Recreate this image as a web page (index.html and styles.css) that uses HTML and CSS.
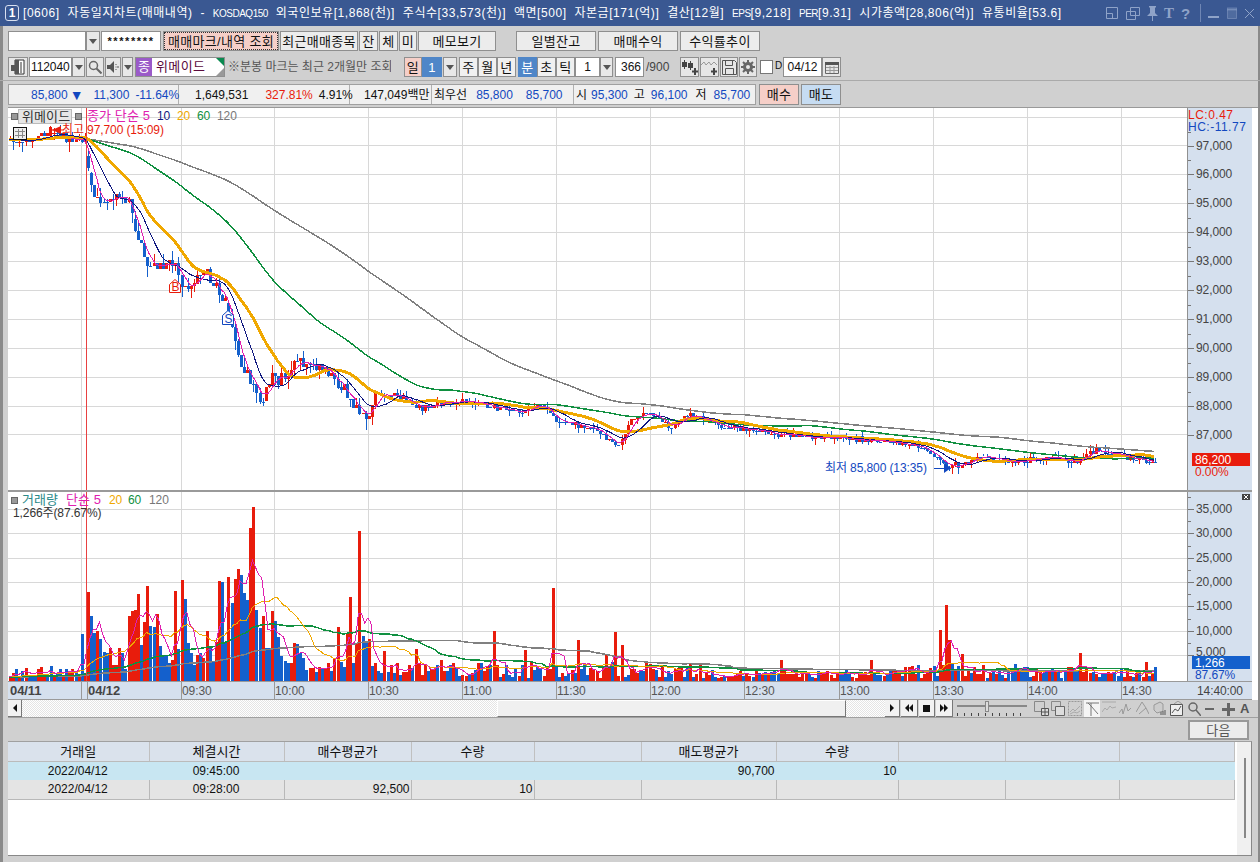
FILE: index.html
```html
<!DOCTYPE html>
<html>
	<head>
		<meta charset="UTF-8">
		<title>자동일지차트</title>
		<link rel="stylesheet" href="styles.css">
	</head>
	<body>
		<div class="window">
			<!-- 타이틀바 -->
			<header class="titlebar">
				<span class="winno">1</span>
				<span class="title">[0606] 자동일지차트(매매내역) - <span class="nar">KOSDAQ150</span> 외국인보유[1,868(천)] 주식수[33,573(천)] 액면[500] 자본금[171(억)] 결산[12월] <span class="nar">EPS</span>[9,218] <span class="nar">PER</span>[9.31] 시가총액[28,806(억)] 유통비율[53.6]</span>
				<div class="wintools">
					<svg width="12" height="14" viewBox="0 0 12 14"><path d="M.5 1.5h11v11H.5zM.5 7.5h6v5" fill="none" stroke="#8fa3c8"/></svg>
					<svg class="ml8" width="14" height="14" viewBox="0 0 14 14"><path d="M4.5 1.5h9v8h-9zM.5 5.5h9v8h-9z" fill="none" stroke="#8fa3c8"/></svg>
					<svg class="ml6" width="13" height="15" viewBox="0 0 13 15"><path d="M3 0h7v1L9 2v5l3 3H1l3-3V2L3 1zM6 10h1v5H6z" fill="#8fa3c8"/></svg>
					<span class="wt ml5">T</span>
					<span class="wq ml7">?</span>
					<i class="windiv"></i>
					<svg class="ml7" width="11" height="12" viewBox="0 0 11 12"><path d="M0 9h11v2H0z" fill="#8fa3c8"/></svg>
					<svg class="ml8" width="10" height="12" viewBox="0 0 10 12"><path d="M.5 2.5h9v9h-9zM0 1h10v2H0z" fill="#8fa3c8" stroke="#8fa3c8" stroke-width=".5" fill-opacity=".25"/></svg>
					<svg class="ml8" width="9" height="12" viewBox="0 0 9 12"><path d="M0 2l9 9M9 2l-9 9" stroke="#8fa3c8" fill="none"/></svg>
				</div>
			</header>

			<!-- 조회 버튼줄 -->
			<div class="toolrow r1">
				<span class="inp w78"></span>
				<span class="drop w14"><i></i></span>
				<span class="inp w60 ml1 pw">********</span>
				<button class="btn pinkdot w116 ml2">매매마크/내역 조회</button>
				<button class="btn w78 ml1">최근매매종목</button>
				<button class="btn w19 ml1">잔</button>
				<button class="btn w19 ml1">체</button>
				<button class="btn w18 ml1">미</button>
				<button class="btn w78 ml1">메모보기</button>
				<button class="btn w80 ml20">일별잔고</button>
				<button class="btn w80 ml2">매매수익</button>
				<button class="btn w80 ml2">수익률추이</button>
			</div>

			<!-- 종목 버튼줄 -->
			<div class="toolrow r2">
				<span class="ico w20"><svg width="16" height="16" viewBox="0 0 16 16"><path d="M5 1h9v14H5z" fill="#fff" stroke="#333"/><path d="M5 1h4v14H5zM1 6h6v6H1z" fill="#555"/><path d="M11 3v11" stroke="#333"/></svg></span>
				<span class="inp w43 ml1 code">112040</span>
				<span class="drop w13"><i></i></span>
				<span class="ico w18 ml1"><svg width="14" height="14" viewBox="0 0 14 14"><circle cx="5.5" cy="5.5" r="4" fill="none" stroke="#666" stroke-width="1.5"/><path d="M8.5 8.5l5 5" stroke="#666" stroke-width="2"/></svg></span>
				<span class="ico w16 ml1"><svg width="13" height="12" viewBox="0 0 13 12"><path d="M0 4h3l4-4v12L3 8H0z" fill="#555"/><path d="M9 3v1M9 5.500v1M9 8v1M11 5v2" stroke="#555"/></svg></span>
				<span class="drop w11 ml1"><i></i></span>
				<div class="stock ml2"><span class="jong">종</span><span class="sname">위메이드</span></div>
				<span class="note">※분봉 마크는 최근 2개월만 조회</span>
				<button class="btn flat pink w18 ml13">일</button>
				<button class="btn flat blue w20">1</button>
				<span class="drop w14 ml1"><i></i></span>
				<button class="btn flat w19 ml2">주</button>
				<button class="btn flat w19">월</button>
				<button class="btn flat w19">년</button>
				<button class="btn flat blue w19 ml2">분</button>
				<button class="btn flat w19">초</button>
				<button class="btn flat w19">틱</button>
				<span class="inp w25 ctr">1</span>
				<span class="drop w13"><i></i></span>
				<span class="inp w29 ml2 rgt">366</span>
				<span class="of900">/900</span>
				<span class="ico w19 ml10"><svg width="17" height="16" viewBox="0 0 17 16"><path d="M3 1h1v2h2v5H4v2H3V8H1V3h2zM9 2h1v2h2v5h-2v2H9V9H7V4h2z" fill="#444"/><path d="M13 9h2v2.500h2v2h-2V16h-2v-2.500h-2v-2h2z" fill="#444"/></svg></span>
				<span class="ico w19 ml1"><svg width="17" height="16" viewBox="0 0 17 16"><path d="M0 6l3-3 2 3 3-3 2 3 3-3 3 3" fill="none" stroke="#999"/><path d="M12 9h2v2.500h2v2h-2V16h-2v-2.500h-2v-2h2z" fill="#444"/></svg></span>
				<span class="ico w18 ml1"><svg width="15" height="15" viewBox="0 0 15 15"><path d="M.5.500h12l2 2v12H.5z" fill="none" stroke="#555" stroke-width="1"/><path d="M3.500.500h7v5h-7zM3.500 8.500h8v6h-8z" fill="none" stroke="#555"/></svg></span>
				<span class="ico w18 ml1"><svg width="14" height="14" viewBox="0 0 14 14"><circle cx="7" cy="7" r="3.500" fill="none" stroke="#666" stroke-width="3"/><path d="M7 0v3M7 11v3M0 7h3M11 7h3M2 2l2 2M10 10l2 2M12 2l-2 2M4 10l-2 2" stroke="#666" stroke-width="2"/></svg></span>
				<span class="chk ml3"></span>
				<span class="dlabel">D</span>
				<span class="inp w39 ml2 ctr">04/12</span>
				<span class="ico w19"><svg width="14" height="13" viewBox="0 0 14 13"><path d="M.5 2.500h13v10H.5z" fill="none" stroke="#666"/><path d="M0 1h14v3H0z" fill="#555"/><path d="M1 6.500h12M1 9.500h12M5 5v7M9 5v7" stroke="#999"/></svg></span>
			</div>

			<div class="rowline"></div>

			<!-- 시세줄 -->
			<div class="quoterow">
				<div class="quote">
					<div class="qc q1"><span class="bl">85,800</span><span class="arrow">▼</span><span class="bl ml10">11,300</span><span class="bl ml6">-11.64%</span></div>
					<div class="qc q2"><span class="m16">1,649,531</span><span class="rd ml17">327.81%</span><span class="ml6">4.91%</span></div>
					<div class="qc q3"><span class="ml14">147,049백만</span></div>
					<div class="qc q4"><span class="ml2">최우선</span><span class="bl ml9">85,800</span><span class="bl ml13">85,700</span></div>
					<div class="qc q5"><span class="ml2">시</span><span class="bl ml4">95,300</span><span class="ml6">고</span><span class="bl ml6">96,100</span><span class="ml8">저</span><span class="bl ml7">85,700</span></div>
				</div>
				<button class="btn flat pink w40 ml3">매수</button>
				<button class="btn flat lblue w40 ml2">매도</button>
			</div>

			<!-- 차트 -->
			<div class="chartbox" id="chart"></div>

			<!-- 차트 스크롤 -->
			<div class="scrollrow">
				<span class="sbtn w14"><i class="tri-l"></i></span>
				<span class="track w475"></span>
				<span class="thumb"></span>
				<span class="track w39"></span>
				<span class="sbtn w15"><i class="tri-r"></i></span>
				<span class="sbtn w17 ml1"><i class="tri-l"></i><i class="tri-l"></i></span>
				<span class="sbtn w16 ml1"><i class="stop"></i></span>
				<span class="sbtn w17 ml1"><i class="tri-r"></i><i class="tri-r"></i></span>
				<div class="slider"><i class="sl-line"></i><i class="sl-knob"></i></div>
				<div class="charttools">
					<svg width="15" height="15" viewBox="0 0 15 15"><path d="M.5.500h10v10H.5z" fill="none" stroke="#888"/><path d="M7.500 7.500h7v7h-7zM11 8v6M8 11h6" fill="#ddd" stroke="#555"/></svg>
					<svg class="ml2" width="14" height="15" viewBox="0 0 14 15"><path d="M.5.500h9v9h-9z" fill="none" stroke="#888"/><path d="M4.500 5.500h9v9h-9z" fill="#ddd" stroke="#666"/></svg>
					<svg class="ml3" width="14" height="15" viewBox="0 0 14 15"><path d="M.5.500h13v14H.5z" fill="none" stroke="#999" stroke-dasharray="2 1"/><path d="M2 11l3-3 2 2 5-5M2 13l4-2 3 1 3-2" fill="none" stroke="#aaa"/></svg>
					<span class="sel ml2"><svg width="13" height="14" viewBox="0 0 13 14"><path d="M0 1h13M2 1l3 3M5 1v13M5 4l7 8" fill="none" stroke="#777"/></svg></span>
					<svg class="ml2" width="14" height="15" viewBox="0 0 14 15"><path d="M0 1h14M0 11l3-4 2 2 3-4 2 2 4-1" fill="none" stroke="#aaa"/></svg>
					<svg class="ml3" width="12" height="15" viewBox="0 0 12 15"><path d="M0 12l3-4 1 5 3-10 2 7 3-3" fill="none" stroke="#999"/></svg>
					<svg class="ml5" width="13" height="15" viewBox="0 0 13 15"><path d="M0 11l6-10 4 6-7 6M10 7l3 6" fill="none" stroke="#999"/></svg>
					<svg class="ml4" width="13" height="15" viewBox="0 0 13 15"><path d="M1 4l6-3 3 2v7l-6 2-3-3z" fill="#ccc" stroke="#999"/><path d="M8 14v-3M10 14v-4M12 14v-5" stroke="#555"/></svg>
					<svg class="ml4" width="13" height="15" viewBox="0 0 13 15"><path d="M.5 3.500h12v11H.5z" fill="#eee" stroke="#555"/><path d="M2 12l3-4 3 2 3-5" fill="none" stroke="#555"/><path d="M4 3l4-3 4 3" fill="none" stroke="#999"/></svg>
					<svg class="ml5" width="13" height="14" viewBox="0 0 13 14"><circle cx="5" cy="5" r="4" fill="none" stroke="#666" stroke-width="1.500"/><path d="M8 8l5 6" stroke="#666" stroke-width="1.500"/></svg>
					<svg class="ml4" width="10" height="14" viewBox="0 0 10 14"><path d="M0 6h9v2H0z" fill="#666"/></svg>
					<svg class="ml7" width="13" height="14" viewBox="0 0 13 14"><path d="M5 1h3v5h5v3H8v5H5V9H0V6h5z" fill="#666"/></svg>
					<span class="aicon ml5">A</span>
				</div>
			</div>

			<div class="nextrow"><button class="btn nextbtn">다음</button></div>

			<!-- 매매내역 -->
			<div class="gridwrap">
				<table class="grid">
					<colgroup>
						<col class="c1"><col class="c2"><col class="c3"><col class="c4"><col class="c5">
						<col class="c6"><col class="c7"><col class="c8"><col class="c9"><col class="c10">
					</colgroup>
					<thead>
						<tr><th>거래일</th><th>체결시간</th><th>매수평균가</th><th>수량</th><th></th><th>매도평균가</th><th>수량</th><th></th><th></th><th></th></tr>
					</thead>
					<tbody>
						<tr class="sel-row"><td class="ctr">2022/04/12</td><td class="ctr">09:45:00</td><td></td><td></td><td></td><td>90,700</td><td>10</td><td></td><td></td><td></td></tr>
						<tr><td class="ctr">2022/04/12</td><td class="ctr">09:28:00</td><td>92,500</td><td>10</td><td></td><td></td><td></td><td></td><td></td><td></td></tr>
					</tbody>
				</table>
				<div class="vscroll"><i></i></div>
			</div>
		</div>
		<script src="chart.js"></script>
	</body>
</html>
```

FILE: styles.css
```css
*{
	margin:0;padding:0;
	box-sizing:border-box;
}
html,body{
	width:1260px;
	height:862px;
	overflow:hidden;
}
body{
	background:#d0d0d0;
	font:12px/1 "Liberation Sans","Noto Sans CJK KR",sans-serif;
	color:#111;
}
.window{
	height:862px;
	border-left:3px solid #8a8a8a;
	border-right:2px solid #8a8a8a;
	display:flex;
	flex-direction:column;
}
/*타이틀바*/
.titlebar{
	height:26px;
	margin:0 -2px 0 -3px;
	background:#3a5892;
	color:#fff;
	display:flex;
	align-items:center;
	padding-left:5px;
	flex:none;
}
.winno{
	width:14px;
	height:16px;
	border:1px solid #d8e0f0;
	border-radius:3px;
	font-weight:bold;
	text-align:center;
	line-height:14px;
	color:#fff;
	font-size:12px;
}
.title{
	margin-left:4px;
	font-size:12px;
	white-space:nowrap;
	letter-spacing:.55px;
	word-spacing:4px;
	width:1080px;
}
.nar{
	font-size:10px;
	letter-spacing:-.5px;
}
.wintools{
	margin-left:3px;
	display:flex;
	align-items:center;
}
.wt{color:#8fa3c8;font:bold 15px "Liberation Serif",serif;}
.wq{color:#8fa3c8;font:bold 15px "Liberation Sans",sans-serif;}
.windiv{
	width:1px;
	height:18px;
	background:#6f86b4;
	margin-left:10px;
}
/*버튼줄*/
.toolrow{
	display:flex;
	padding-left:5px;
	height:20px;
	flex:none;
	align-items:stretch;
}
.r1{margin-top:5px;}
.r2{margin-top:6px;}
.rowline{
	height:1px;
	margin:3px -2px 0 -3px;
	background:#aaa;
	flex:none;
}
.inp{
	background:#fff;
	border:1px solid #8f8f8f;
	display:flex;
	align-items:center;
	padding:0 2px;
	font-size:12px;
	white-space:nowrap;
}
.pw{justify-content:center;font-weight:bold;font-size:11px;letter-spacing:1.6px;}
.code{font-size:12px;padding:0 1px;letter-spacing:-.1px;}
.ctr{justify-content:center;text-align:center;}
.rgt{justify-content:flex-end;}
.drop{
	background:#e8e8e8;
	border:1px solid #8f8f8f;
	display:flex;
	align-items:center;
	justify-content:center;
}
.drop i{
	border:4px solid transparent;
	border-top:5px solid #555;
	border-bottom:0;
}
.btn{
	font:inherit;
	font-size:13px;
	letter-spacing:.3px;
	background:#ececec;
	border:1px solid #8f8f8f;
	color:#111;
	white-space:nowrap;
	overflow:hidden;
}
.btn.flat{background:#f0f0f0;}
.btn.pink{background:#f6cfc8;}
.btn.blue{background:#4f86c8;color:#fff;border-color:#4f86c8;}
.btn.lblue{background:#c6dcf2;}
.pinkdot{
	background:#f6cfc8;
	outline:1px dotted #333;
	outline-offset:-2px;
}
.ico{
	background:#e6e6e6;
	border:1px solid #8f8f8f;
	display:flex;
	align-items:center;
	justify-content:center;
}
.stock{
	width:90px;
	background:#fff;
	border:1px solid #8f8f8f;
	display:flex;
	position:relative;
	overflow:hidden;
}
.stock:before{
	content:"";
	position:absolute;
	right:0;top:0;
	border-top:8px solid #0a8a50;
	border-left:8px solid transparent;
}
.stock:after{
	content:"";
	position:absolute;
	right:0;bottom:0;
	border-bottom:8px solid #999;
	border-left:8px solid transparent;
}
.jong{
	width:16px;
	background:#9a5ac8;
	color:#fff;
	text-align:center;
	line-height:18px;
	font-size:13px;
}
.sname{
	color:#5a0a3c;
	margin-left:4px;
	line-height:18px;
	font-size:13px;
	letter-spacing:.4px;
}
.note{
	margin-left:3px;
	width:163px;
	line-height:20px;
	color:#555;
	font-size:12px;
	white-space:nowrap;
	overflow:hidden;
}
.of900{line-height:20px;margin-left:2px;width:24px;color:#444;}
.chk{
	width:13px;
	height:14px;
	margin-top:3px;
	background:#fff;
	border:1px solid #777;
}
.dlabel{font-size:10px;line-height:18px;margin-left:2px;width:6px;}

.w11{width:11px;}.w13{width:13px;}.w14{width:14px;}.w15{width:15px;}.w16{width:16px;}.w17{width:17px;}
.w18{width:18px;}.w19{width:19px;}.w20{width:20px;}.w25{width:25px;}.w29{width:29px;}.w39{width:39px;}
.w40{width:40px;}.w43{width:43px;}.w60{width:60px;}.w78{width:78px;}.w80{width:80px;}.w116{width:116px;}
.ml1{margin-left:1px;}.ml2{margin-left:2px;}.ml3{margin-left:3px;}.ml4{margin-left:4px;}.ml5{margin-left:5px;}
.ml6{margin-left:6px;}.ml7{margin-left:7px;}.ml8{margin-left:8px;}.ml9{margin-left:9px;}.ml10{margin-left:10px;}
.ml13{margin-left:13px;}.ml14{margin-left:14px;}.ml17{margin-left:17px;}.ml20{margin-left:20px;}
/*시세줄*/
.quoterow{
	display:flex;
	height:21px;
	margin-top:3px;
	padding-left:5px;
	flex:none;
}
.quote{
	width:748px;
	display:flex;
	background:#f0f0f0;
	border:1px solid #a0a0a0;
	white-space:nowrap;
}
.qc{
	display:flex;
	align-items:center;
	border-right:1px solid #b0b0b0;
	font-size:12px;
}
.q1{width:170px;padding-left:22px;}
.q2{width:171px;}
.q3{width:82px;}
.q4{width:142px;}
.q5{flex:1;border-right:0;}
.m16{margin-left:16px;}
.bl{color:#1248c0;}
.rd{color:#e81c0c;}
.arrow{color:#1248c0;font-size:14px;margin-left:2px;}
/*차트*/
.chartbox{
	height:593px;
	margin:2px 0 0 5px;
	border-top:1px solid #999;
	background:#fff;
	flex:none;
}
.chartbox svg{display:block;}
.scrollrow{
	height:18px;
	margin-left:5px;
	display:flex;
	align-items:stretch;
	border-bottom:1px solid #a0a0a0;
	flex:none;
}
.sbtn{
	background:#f2f2f2;
	border-right:1px solid #777;
	border-bottom:1px solid #777;
	display:flex;
	align-items:center;
	justify-content:center;
}
.tri-l{border:4px solid transparent;border-right:4px solid #111;border-left:0;}
.tri-r{border:4px solid transparent;border-left:4px solid #111;border-right:0;}
.stop{width:7px;height:7px;background:#111;}
.track{
	background:#fff url("data:image/svg+xml,%3Csvg xmlns='http://www.w3.org/2000/svg' width='2' height='2'%3E%3Crect width='1' height='1' fill='%23e4e4e4'/%3E%3Crect x='1' y='1' width='1' height='1' fill='%23e4e4e4'/%3E%3C/svg%3E");
}
.w475{width:475px;}
.track.w39{width:39px;}
.thumb{
	width:349px;
	background:#f0f0f0;
	border-left:1px solid #fff;
	border-top:1px solid #fff;
	border-right:1px solid #777;
	border-bottom:1px solid #777;
}
.slider{
	width:70px;
	margin-left:4px;
	position:relative;
	background:repeating-linear-gradient(90deg,#444 0 1px,transparent 1px 7px) 0 13px/100% 3px no-repeat;
}
.sl-line{
	position:absolute;
	left:0;right:0;top:5px;
	height:2px;
	background:#888;
}
.sl-knob{
	position:absolute;
	left:28px;top:1px;
	width:4px;
	height:11px;
	background:#ddd;
	border:1px solid #888;
}
.charttools{
	display:flex;
	align-items:center;
	margin-left:7px;
}
.sel{
	width:16px;
	height:17px;
	background:#f4f4f4;
	display:flex;
	align-items:center;
	justify-content:center;
}
.aicon{color:#555;font-weight:bold;font-size:13px;}
/*다음*/
.nextrow{
	height:23px;
	display:flex;
	justify-content:flex-end;
	align-items:flex-start;
	padding:2px 9px 0 0;
	flex:none;
}
.nextbtn{
	width:61px;
	height:20px;
	background:#ececec;
	color:#555;
	border:2px solid #999;
}
/*표*/
.gridwrap{
	height:115px;
	width:1244px;
	margin-left:5px;
	border-top:1px solid #a0a0a0;
	border-right:1px solid #888;
	border-bottom:1px solid #888;
	background:#fff;
	display:flex;
	flex:none;
}
.grid{
	width:1226px;
	border-collapse:collapse;
	table-layout:fixed;
	align-self:flex-start;
	flex:none;
}
.c1{width:141px;}.c2{width:135px;}.c3{width:127px;}.c4{width:123px;}.c5{width:107px;}
.c6{width:135px;}.c7{width:122px;}.c8{width:107px;}.c9{width:114px;}.c10{width:115px;}
.grid th{
	height:19px;
	background:#dae2ec;
	font-weight:normal;
	font-size:13px;
	border-right:1px solid #c0c0c0;
	border-bottom:1px solid #bbb;
}
.grid td{
	height:19px;
	background:#e4e4e4;
	text-align:right;
	padding-right:1px;
	border-right:1px solid #b8b8b8;
	border-bottom:1px solid #b8b8b8;
}
.grid td.ctr{text-align:center;}
.grid .sel-row td{
	background:#c8e6f2;
	border-bottom:0;
	border-right-color:#c8e6f2;
}
.vscroll{
	flex:1;
	margin-left:2px;
	background:#f0f0f0;
	position:relative;
}
.vscroll i{
	position:absolute;
	left:7px;top:16px;
	width:2px;
	height:80px;
	background:#888;
}
```

FILE: chart.js
```javascript
//차트 좌표는 화면 픽셀 기준 (viewBox로 맞춤)
(function () {
	var seed = 7;
	function rnd() {
		seed = (seed * 16807) % 2147483647;
		return seed / 2147483647;
	}
	var X0 = 87, STEP = 3.12, LEFT = 8, RIGHT = 1187;
	var TICK = 2.89;  //호가 100원
	var RED = '#e81c0c', BLUE = '#1460cc';

	//종가 궤적 [x, y]
	var path = [[8,141],[30,138],[50,132],[70,140],[85,143],[88,185],[95,200],[105,198],[120,191],[128,205],[136,235],[145,262],[155,268],[175,265],[185,290],[193,280],[203,270],[215,290],[224,300],[232,335],[240,362],[250,385],[262,400],[270,380],[280,378],[295,360],[310,365],[330,375],[350,398],[366,418],[375,395],[400,396],[420,408],[440,404],[470,400],[500,410],[520,412],[538,404],[555,420],[590,428],[618,445],[630,418],[650,412],[670,427],[685,415],[720,426],[800,436],[870,440],[920,446],[945,466],[965,464],[985,455],[1010,462],[1050,457],[1075,461],[1095,450],[1120,456],[1155,462]];
	function interp(x) {
		for (var k = 1; k < path.length; k++) {
			if (x <= path[k][0]) {
				var a = path[k - 1], b = path[k];
				return a[1] + (b[1] - a[1]) * (x - a[0]) / (b[0] - a[0]);
			}
		}
		return path[path.length - 1][1];
	}

	var bars = [], xs = [], closes = [];
	for (var i = -25; i <= 342; i++) {
		xs.push(X0 + STEP * i);
	}
	var prev = 140;
	xs.forEach(function (x) {
		var early = x < 380;
		var amp = x < 87 ? 3 : early ? 6 : 2.2;
		var c = Math.round((interp(x) + (rnd() - 0.5) * amp * 2) / TICK) * TICK;
		var o = prev;
		if (Math.abs(o - c) > 16) o = c - 12;
		var hi = Math.min(o, c) - (rnd() < 0.45 ? 0 : rnd() * (early ? 9 : 6));
		var lo = Math.max(o, c) + (rnd() < 0.45 ? 0 : rnd() * (early ? 11 : 6));
		bars.push({ x: x, o: o, c: c, hi: hi, lo: lo, doji: rnd() });
		closes.push(c);
		prev = c;
	});
	function ma(arr, len, pad) {
		var out = [];
		for (var i = 0; i < arr.length; i++) {
			var s = 0;
			for (var j = i - len + 1; j <= i; j++) {
				s += j < 0 ? pad : arr[j];
			}
			out.push(s / len);
		}
		return out;
	}
	function line(vals, color, w, from) {
		var pts = [];
		for (var i = from || 0; i < vals.length; i++) {
			pts.push(xs[i].toFixed(1) + ',' + vals[i].toFixed(1));
		}
		return '<polyline points="' + pts.join(' ') + '" fill="none" stroke="' + color + '" stroke-width="' + w + '" shape-rendering="crispEdges"/>';
	}
	function txt(x, y, s, color, cls) {
		return '<text x="' + x + '" y="' + y + '" fill="' + color + '"' + (cls ? ' class="' + cls + '"' : '') + '>' + s + '</text>';
	}
	function rect(x, y, w, h, c, extra) {
		return '<rect x="' + x + '" y="' + y + '" width="' + w + '" height="' + h + '" fill="' + c + '"' + (extra || '') + '/>';
	}

	var s = '';
	s += '<style>text{font:12px "Liberation Sans","Noto Sans CJK KR",sans-serif;letter-spacing:-.1px}.b{font-weight:bold;font-size:13px}.k{font-size:13px;letter-spacing:.1px}.lc{letter-spacing:.5px}</style>';

	//격자
	var g = '';
	for (var p = 0; p <= 11; p++) {
		g += rect(LEFT, 117 + p * 28.9 | 0, RIGHT - LEFT, 1, '#d8d8d8');
	}
	for (var v = 1; v <= 7; v++) {
		g += rect(LEFT, Math.round(509 + (v - 1) * 24.35), RIGHT - LEFT, 1, '#d8d8d8');
	}
	var times = [[181,'09:30'],[274,'10:00'],[368,'10:30'],[462,'11:00'],[556,'11:30'],[650,'12:00'],[744,'12:30'],[839,'13:00'],[933,'13:30'],[1027,'14:00'],[1121,'14:30']];
	[81].concat(times.map(function (t) { return t[0]; })).forEach(function (x) {
		g += rect(x, 108, 1, 574, '#d8d8d8');
	});
	s += '<g shape-rendering="crispEdges">' + g + '</g>';

	//캔들
	var c = '';
	bars.forEach(function (b) {
		var flat = Math.abs(b.o - b.c) < 1;
		var up = flat ? b.doji > 0.75 : b.c < b.o, col = up ? RED : BLUE;
		var x = Math.round(b.x);
		var top = Math.round(Math.min(b.o, b.c));
		var h = flat ? 1 : Math.round(Math.abs(b.o - b.c));
		c += rect(x + 1, Math.round(b.hi), 1, Math.max(1, Math.round(b.lo - b.hi)), col);
		c += rect(x, top, 3, h, col);
	});
	//최고 봉
	c += rect(50, 126, 1, 12, RED) + rect(49, 127, 3, 9, RED);
	s += '<g shape-rendering="crispEdges">' + c + '</g>';

	var padTop = 139;
	s += line(ma(closes, 120, padTop), '#808080', 1.5, 25);
	s += line(ma(closes, 60, padTop), '#109040', 1.5);
	s += line(ma(closes, 20, padTop), '#f0a800', 3);
	s += line(ma(closes, 10, padTop), '#101880', 1);
	s += line(ma(closes, 5, padTop), '#e020b0', 1, 20);

	//매매 마크
	s += '<path d="M175 279.500l5.500 5v8h-11v-8z" fill="#fff" stroke="#e81c0c"/>' + txt(171.500, 291, 'B', RED);
	s += '<path d="M228 310.500l5.500 5v9h-11v-9z" fill="#fff" stroke="#1248c0"/>' + txt(224.500, 322.500, 'S', '#1248c0');

	//거래량. 앞부분은 봉별 윗변 (3배 확대 y값), 음수는 파랑
	var tops = [-378,-428,422,-447,-485,-490,473,525,525,473,-490,-538,378,362,360,312,-465,396,288,-407,-410,372,-468,-495,-495,-520,510,303,-476,270,-327,-458,-490,-525,495,-490,505,423,-475,-515,455,272,-275,-460,260,-340,268,237,-255,-308,-330,113,50,-360,-415,378,-473,-473,363,-393,-440,-497,-513,-520,518,458,-462,-490,-505,-540,533,533,-545,530,-538,535,520,-542,505,410,-515,-530,432,320,-520,460,123,-437,-455,447,-527,520,-543,-548,483,-545,525,-550,518,-555,545,545,525,-535,478];
	var spikes = { 492: 631, 523: 650, 551: 588, 578: 640, 613: 632, 622: 645, 440: 660, 780: 660, 870: 660, 940: 630, 946: 605, 949: 640, 1078: 653, 1146: 662, 604: 654, 650: 664, 690: 664, 960: 654 };
	var BASE = 681, vols = [], vcol = [];
	xs.forEach(function (x, n) {
		var idx = n - 26, h, red = rnd() > 0.48;
		if (n === 25) {
			h = BASE - 592; red = true;
		} else if (n < 25) {
			h = 3 + rnd() * 6;
			if (rnd() > 0.8) h = 10 + rnd() * 6;
			if (n === 23) h = BASE - 634;
		} else if (idx < tops.length) {
			var t = tops[idx];
			red = t > 0;
			h = BASE - (490 + Math.abs(t) / 3);
		} else {
			var env = x < 700 ? 16 : x < 900 ? 8 : 14;
			h = 3 + rnd() * env;
			for (var k in spikes) {
				if (Math.abs(x - k) < 1.6) { h = BASE - spikes[k]; red = true; }
			}
		}
		vols.push(h);
		vcol.push(red ? RED : BLUE);
	});
	var vb = '';
	vols.forEach(function (h, n) {
		var x = Math.round(xs[n]);
		h = Math.round(h);
		vb += rect(x, BASE - h, 3, h, vcol[n]);
	});
	s += '<g shape-rendering="crispEdges">' + vb + '</g>';
	function volLine(len, color, w) {
		var m = ma(vols, len, 4);
		return line(m.map(function (h) { return BASE - h; }), color, w);
	}
	s += volLine(120, '#808080', 1.5) + volLine(60, '#109040', 1.5) + volLine(20, '#f0a800', 1) + volLine(5, '#e020b0', 1);

	//기준선
	s += rect(86, 108, 1, 574, '#e84040', ' shape-rendering="crispEdges"');

	//축
	var ax = '<g shape-rendering="crispEdges">';
	ax += rect(RIGHT + 1, 108, 65, 574, '#d5e0ee');
	ax += rect(RIGHT, 108, 1, 592, '#909090');
	ax += rect(8, 490, 1244, 2, '#9a9a9a');
	ax += rect(8, 681, 1244, 1, '#9a9a9a');
	ax += rect(8, 682, 1244, 18, '#d5e0ee');
	ax += rect(8, 699, 1244, 1, '#9a9a9a');
	var lab = '', k;
	for (k = 0; k < 11; k++) {
		var y = 146 + k * 28.9 | 0;
		ax += rect(RIGHT + 1, y, 6, 1, '#777') + rect(RIGHT + 1, y - 14, 3, 1, '#777');
		lab += txt(1196, y + 4, (97 - k) + ',000', '#444');
	}
	for (k = 0; k < 7; k++) {
		var vy = Math.round(509 + k * 24.35);
		ax += rect(RIGHT + 1, vy, 6, 1, '#777') + rect(RIGHT + 1, vy - 12, 3, 1, '#777');
		//5,000은 현재가 박스 바로 위
		lab += txt(1196, k == 6 ? 656 : vy + 4, (35 - k * 5) + ',000', '#444');
	}
	ax += rect(81, 682, 1, 17, '#999');
	ax += rect(87, 682, 1, 17, '#999');
	times.forEach(function (t) {
		ax += rect(t[0], 682, 1, 17, '#999');
		lab += txt(t[0] + 1, 695, t[1], '#555');
	});
	ax += '</g>';
	s += ax + lab;
	s += txt(10, 695, '04/11', '#444', 'b') + txt(88, 695, '04/12', '#444', 'b') + txt(1197, 695, '14:40:00', '#444');

	//우측 라벨
	s += txt(1188, 119, 'LC:0.47', RED, 'lc') + txt(1188, 131, 'HC:-11.77', '#1248c0', 'lc');
	s += rect(1192, 453, 58, 13, RED, ' shape-rendering="crispEdges"') + txt(1195, 464, '86,200', '#fff') + txt(1195, 476, '0.00%', RED);
	s += rect(1192, 656, 58, 13, '#1460cc', ' shape-rendering="crispEdges"') + txt(1195, 667, '1,266', '#fff') + txt(1195, 679, '87.67%', '#1248c0');
	s += rect(1242, 494, 8, 6, '#444', ' shape-rendering="crispEdges"') + '<path d="M1244 495l4 4M1248 495l-4 4" stroke="#fff"/>';

	//범례
	s += rect(11, 113, 6, 6, '#999', ' stroke="#666" shape-rendering="crispEdges"');
	s += rect(18.500, 109.500, 53, 14, '#e6e6e6', ' stroke="#bbb" shape-rendering="crispEdges"') + txt(22, 121, '위메이드', '#333', 'k');
	s += rect(75, 113, 6, 6, '#999', ' stroke="#666" shape-rendering="crispEdges"');
	s += txt(87, 120, '종가 단순 5', '#e020b0', 'k') + txt(157, 120, '10', '#101880') + txt(177, 120, '20', '#f0a800') + txt(197, 120, '60', '#109040') + txt(217, 120, '120', '#777');
	s += txt(62, 134, '최고 97,700 (15:09)', RED);
	s += '<path d="M52 130l9 -4v8z" fill="' + RED + '"/>' + rect(52, 129.500, 12, 1, RED);
	s += rect(13.500, 127.500, 13, 12, '#eee', ' stroke="#111" shape-rendering="crispEdges"') + '<path d="M15 131h10M15 135h10M18 129v9M22 129v9" stroke="#888" fill="none" shape-rendering="crispEdges"/>';
	s += txt(825, 472, '최저 85,800 (13:35)', '#1248c0');
	s += '<path d="M934 468h12" stroke="#1248c0" shape-rendering="crispEdges"/><path d="M951 468l-7 -5v10z" fill="#1248c0"/>';

	s += rect(11, 497, 6, 6, '#999', ' stroke="#666" shape-rendering="crispEdges"');
	s += txt(22, 504, '거래량', '#2a8a8a', 'k') + txt(66, 504, '단순 5', '#e020b0', 'k') + txt(109, 504, '20', '#f0a800') + txt(128, 504, '60', '#109040') + txt(149, 504, '120', '#777');
	s += txt(13, 517, '1,266주(87.67%)', '#333');

	document.getElementById('chart').innerHTML =
		'<svg width="1244" height="592" viewBox="8 108 1244 592" xmlns="http://www.w3.org/2000/svg">' + s + '</svg>';
})();
```
